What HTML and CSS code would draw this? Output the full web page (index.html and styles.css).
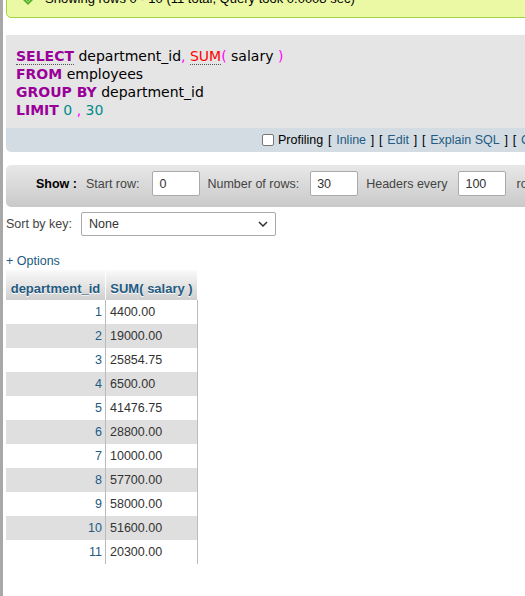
FILE: index.html
```html
<!DOCTYPE html>
<html>
<head>
<meta charset="utf-8">
<link rel="stylesheet" href="styles.css">
</head>
<body>
<div class="page">
  <div class="success">
    <svg class="ok-icon" width="12" height="14" viewBox="0 0 12 14"><path d="M0 7 L6 13 L12 7 L6 1 Z" fill="#5bb030"/><path d="M3 7 L6 10 L9 7" fill="none" stroke="#9ee070" stroke-width="1"/></svg>
    <span>Showing rows 0 - 10 (11 total, Query took 0.0008 sec)</span>
  </div>

  <div class="sqlbox">
    <div class="sql">
      <div><span class="kw dotted">SELECT</span> department_id<span class="pn">,</span> <span class="fn dotted">SUM</span><span class="pn">(</span> salary <span class="pn">)</span></div>
      <div><span class="kw">FROM</span> employees</div>
      <div><span class="kw">GROUP BY</span> department_id</div>
      <div><span class="kw">LIMIT</span> <span class="num">0</span> <span class="pn">,</span> <span class="num">30</span></div>
    </div>
    <div class="tools">
      <span class="cb"></span><span class="prof">Profiling [ <a class="lnk">Inline</a> ] [ <a class="lnk">Edit</a> ] [ <a class="lnk">Explain SQL</a> ] [ <a class="lnk">Create PHP code</a> ] [ <a class="lnk">Refresh</a> ]</span>
    </div>
  </div>

  <div class="nav">
    <b class="show">Show :</b>
    <span class="lbl l1">Start row:</span>
    <span class="inp i1">0</span>
    <span class="lbl l2">Number of rows:</span>
    <span class="inp i2">30</span>
    <span class="lbl l3">Headers every</span>
    <span class="inp i3">100</span>
    <span class="lbl l4">rows</span>
  </div>

  <div class="sort">
    <span class="sortlbl">Sort by key:</span>
    <div class="select"><span>None</span><svg width="10" height="6" viewBox="0 0 10 6"><path d="M1 1 L5 5 L9 1" fill="none" stroke="#333" stroke-width="1.5"/></svg></div>
  </div>

  <a class="options">+ Options</a>

  <table class="data">
    <thead>
      <tr><th class="c1">department_id</th><th class="c2">SUM( salary )</th></tr>
    </thead>
    <tbody>
      <tr><td class="id">1</td><td class="val">4400.00</td></tr>
      <tr><td class="id">2</td><td class="val">19000.00</td></tr>
      <tr><td class="id">3</td><td class="val">25854.75</td></tr>
      <tr><td class="id">4</td><td class="val">6500.00</td></tr>
      <tr><td class="id">5</td><td class="val">41476.75</td></tr>
      <tr><td class="id">6</td><td class="val">28800.00</td></tr>
      <tr><td class="id">7</td><td class="val">10000.00</td></tr>
      <tr><td class="id">8</td><td class="val">57700.00</td></tr>
      <tr><td class="id">9</td><td class="val">58000.00</td></tr>
      <tr><td class="id">10</td><td class="val">51600.00</td></tr>
      <tr><td class="id">11</td><td class="val">20300.00</td></tr>
    </tbody>
  </table>
</div>
</body>
</html>
```
FILE: styles.css
```css
html, body {
  margin: 0;
  padding: 0;
  background: #fff;
}
body {
  width: 525px;
  height: 596px;
  overflow: hidden;
  font-family: "Liberation Sans", Arial, sans-serif;
  font-size: 12.5px;
  color: #444;
}
.page {
  display: flow-root;
  width: 760px;
  height: 596px;
  box-sizing: border-box;
  border-left: 3px solid #a8a8a8;
  padding-left: 3px;
}
.success {
  margin-top: -20px;
  display: flex;
  align-items: center;
  border: 1px solid #a2d246;
  background: #ebf8a4;
  border-radius: 5px;
  padding: 10px 10px 11px 15px;
  line-height: 15px;
  font-size: 13px;
  color: #000;
}
.ok-icon {
  margin-right: 11px;
  flex: none;
}
.sqlbox {
  margin-top: 17px;
}
.sql {
  background: #e5e5e5;
  padding: 12px 10px 9px;
  font-family: "DejaVu Sans", Verdana, sans-serif;
  font-size: 14px;
  line-height: 18px;
  color: #000;
}
.kw {
  color: #990099;
  font-weight: bold;
}
.fn {
  color: #ff0000;
}
.pn {
  color: #ff00ff;
}
.num {
  color: #008b8b;
}
.dotted {
  border-bottom: 1px dotted #555;
}
.tools {
  background: #d3dce3;
  height: 24px;
  border-radius: 0 0 5px 5px;
  display: flex;
  align-items: center;
  padding-left: 256px;
  white-space: nowrap;
  color: #000;
}
.prof {
  word-spacing: 1.3px;
}
.cb {
  width: 10px;
  height: 10px;
  border: 1px solid #767676;
  border-radius: 2px;
  background: #fff;
  margin-right: 4px;
  flex: none;
}
.lnk {
  color: #235a81;
  word-spacing: 0;
}
.nav {
  margin-top: 13px;
  display: flex;
  align-items: center;
  white-space: nowrap;
  background: linear-gradient(#e8e8e8, #c9c9c9);
  border-radius: 5px;
  padding: 6px 0 11px 30px;
}
.show {
  color: #000;
}
.l1 { margin-left: 9px; }
.i1 { margin-left: 13px; }
.l2 { margin-left: 7px; }
.i2 { margin-left: 11px; }
.l3 { margin-left: 8px; }
.i3 { margin-left: 11px; }
.l4 { margin-left: 10px; }
.inp {
  display: flex;
  align-items: center;
  width: 48px;
  height: 25px;
  box-sizing: border-box;
  border: 1px solid #aaa;
  border-radius: 2px;
  background: #fff;
  padding: 0 6px;
  color: #333;
}
.sort {
  margin-top: 5px;
  display: flex;
  align-items: center;
}
.select {
  margin-left: 9px;
  width: 195px;
  height: 24px;
  box-sizing: border-box;
  border: 1px solid #aaa;
  border-radius: 2px;
  background: #fff;
  display: flex;
  align-items: center;
  justify-content: space-between;
  padding: 0 7px 0 7px;
  color: #333;
}
.options {
  display: block;
  margin-top: 18px;
  line-height: 15px;
  color: #235a81;
}
.data {
  margin-top: 1px;
  border-collapse: separate;
  border-spacing: 0;
}
.data th {
  height: 30px;
  box-sizing: border-box;
  padding: 0 0 4px;
  vertical-align: bottom;
  background: linear-gradient(#fafafa, #cfcfcf);
  font-size: 13px;
  font-weight: bold;
  color: #235a81;
  text-shadow: 0 1px 0 #fff;
  line-height: 15px;
  border-right: 1px solid #fff;
}
.data th.c1 { width: 100px; }
.data th.c2 { width: 92px; }
.data td {
  height: 24px;
  padding: 0;
  box-sizing: border-box;
  border-right: 1px solid #bbb;
  line-height: 15px;
}
.data tbody tr:nth-child(even) td {
  background: #dfdfdf;
}
.data td.id {
  text-align: right;
  padding-right: 3px;
  color: #235a81;
}
.data td.val {
  padding-left: 4px;
  color: #333;
}
```
